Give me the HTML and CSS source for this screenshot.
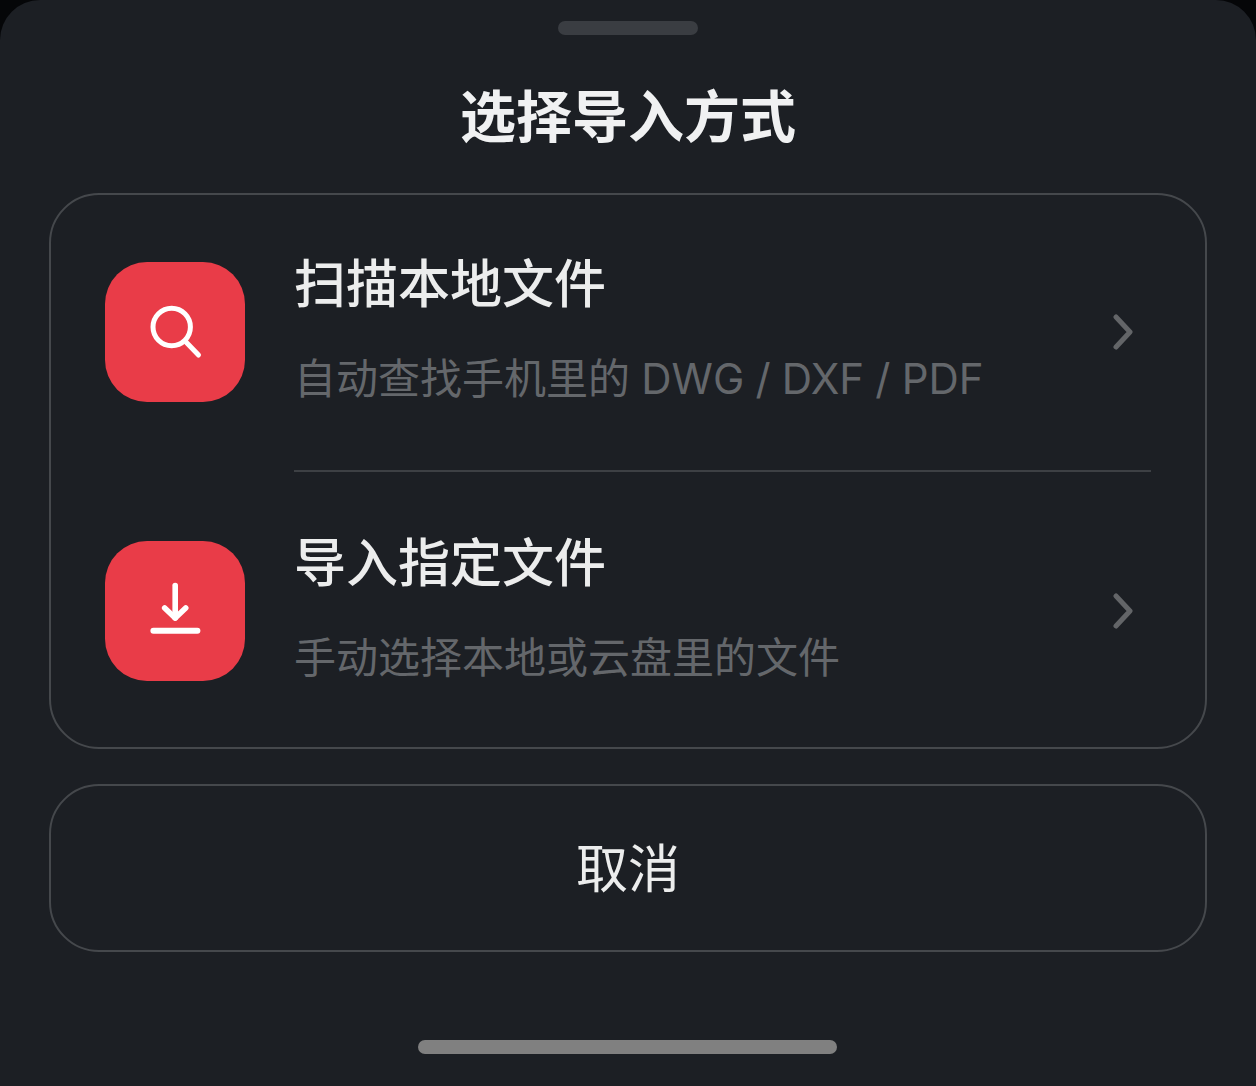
FILE: index.html
```html
<!DOCTYPE html>
<html lang="zh-CN">
<head>
<meta charset="utf-8">
<title>选择导入方式</title>
<link rel="stylesheet" href="styles.css">
</head>
<body>
<div class="sheet">
  <div class="grabber"></div>
  <h1 class="title">选择导入方式</h1>
  <div class="card">
    <div class="row">
      <div class="icon">
        <svg width="60" height="60" viewBox="0 0 60 60" fill="none" stroke="#fff" stroke-linecap="round">
          <circle cx="26.7" cy="25" r="18.7" stroke-width="5"/>
          <path d="M40 39L53.5 53" stroke-width="5"/>
        </svg>
      </div>
      <div class="text">
        <div class="name">扫描本地文件</div>
        <div class="desc">自动查找手机里的 DWG / DXF / PDF</div>
      </div>
      <svg class="chev" width="24" height="36" viewBox="0 0 24 36" fill="none" stroke="#636568" stroke-width="5" stroke-linecap="round" stroke-linejoin="round"><path d="M4 3L18 18L4 33"/></svg>
    </div>
    <div class="divider"></div>
    <div class="row">
      <div class="icon">
        <svg width="60" height="60" viewBox="0 0 60 60" fill="none" stroke="#fff" stroke-width="5.6" stroke-linecap="round" stroke-linejoin="round">
          <path d="M30.2 4.5V37"/>
          <path d="M19.7 27L30.2 37L40.7 27"/>
          <path d="M8.4 49.7H52.4" stroke-width="6"/>
        </svg>
      </div>
      <div class="text">
        <div class="name">导入指定文件</div>
        <div class="desc">手动选择本地或云盘里的文件</div>
      </div>
      <svg class="chev" width="24" height="36" viewBox="0 0 24 36" fill="none" stroke="#636568" stroke-width="5" stroke-linecap="round" stroke-linejoin="round"><path d="M4 3L18 18L4 33"/></svg>
    </div>
  </div>
  <div class="cancel">取消</div>
  <div class="home"></div>
</div>
</body>
</html>
```

FILE: styles.css
```css
html, body {
  margin: 0;
  padding: 0;
  background: #050608;
}
body {
  width: 1256px;
  height: 1086px;
  overflow: hidden;
}
.sheet {
  box-sizing: border-box;
  width: 1256px;
  height: 1086px;
  padding: 21px 49px 0;
  background: #1c1f24;
  border-radius: 40px 40px 0 0;
  display: flex;
  flex-direction: column;
  align-items: center;
  font-family: "Noto Sans CJK SC", "Noto Sans", sans-serif;
}
.grabber {
  width: 140px;
  height: 14px;
  border-radius: 7px;
  background: #3a3d42;
}
.title {
  margin: 0;
  height: 158px;
  padding-top: 43px;
  box-sizing: border-box;
  line-height: 70px;
  font-size: 56px;
  font-weight: 700;
  color: #f0f1f2;
}
.card {
  box-sizing: border-box;
  width: 1158px;
  height: 556px;
  border: 2px solid #45484c;
  border-radius: 50px;
  padding: 67px 0 0 54px;
  display: flex;
  flex-direction: column;
}
.row {
  display: flex;
  align-items: center;
  height: 140px;
  flex: none;
}
.icon {
  flex: none;
  width: 140px;
  height: 140px;
  border-radius: 42px;
  background: #e93c48;
  display: flex;
  align-items: center;
  justify-content: center;
}
.text {
  flex: 1;
  margin-left: 49px;
  padding-bottom: 4px;
  display: flex;
  flex-direction: column;
  gap: 38px;
}
.name {
  font-size: 52px;
  line-height: 60px;
  font-weight: 500;
  color: #eceded;
}
.desc {
  font-family: Inter, "Noto Sans CJK SC", sans-serif;
  font-size: 42px;
  line-height: 60px;
  word-spacing: -0.6px;
  color: #64676b;
}
.chev {
  flex: none;
  margin-right: 69px;
}
.divider {
  flex: none;
  height: 2px;
  background: #3d4044;
  margin: 68px 54px 69px 189px;
}
.cancel {
  box-sizing: border-box;
  width: 1158px;
  height: 168px;
  margin-top: 35px;
  border: 2px solid #45484c;
  border-radius: 50px;
  display: flex;
  align-items: center;
  justify-content: center;
  font-size: 52px;
  color: #eceded;
  padding-bottom: 5px;
}
.home {
  width: 419px;
  height: 14px;
  margin: 88px 2px 0 0;
  border-radius: 7px;
  background: #808080;
}
```
